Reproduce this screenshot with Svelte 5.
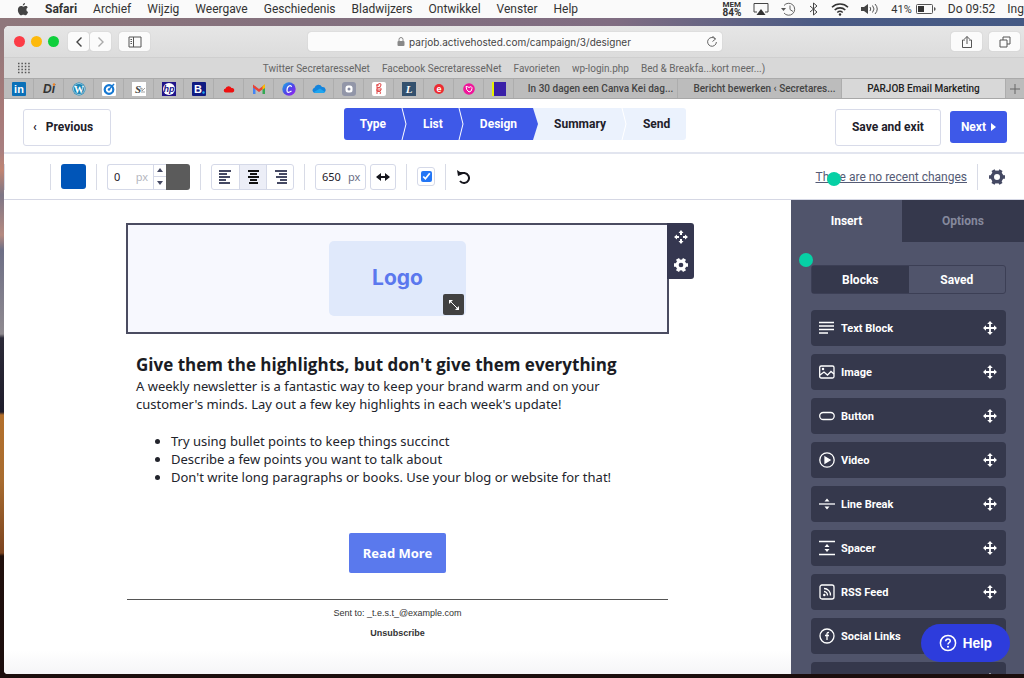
<script>
    const menus = ["Archief", "Wijzig", "Weergave", "Geschiedenis", "Bladwijzers", "Ontwikkel", "Venster", "Help"]
    const bookmarks = ["Twitter SecretaresseNet", "Facebook SecretaresseNet", "Favorieten", "wp-login.php", "Bed & Breakfa...kort meer...)"]
    const pinned = ["linkedin", "di", "wordpress", "target", "sn", "hp", "booking", "cloud", "gmail", "canva", "onedrive", "camera", "script", "letter", "e", "pink", "purple"]
    const tabs = ["In 30 dagen een Canva Kei dag...", "Bericht bewerken ‹ Secretares...", "PARJOB Email Marketing"]
    const steps = ["Type", "List", "Design", "Summary", "Send"]
    const blocks = ["Text Block", "Image", "Button", "Video", "Line Break", "Spacer", "RSS Feed", "Social Links", ""]

    let activeTab = 2
    let currentStep = 2
    let align = "center"
    let border = 0
    let width = 650
    let responsive = true
    let panel = "insert"
    let source = "blocks"
</script>

<div class="desktop">
    <nav class="menubar">
        <svg class="apple" viewBox="0 0 14 16"><path fill="#444" d="M9.5 0c.1 1.5-1.200 3-2.700 3C6.600 1.600 8 .2 9.500 0zM12.700 5.400c-2.300 1.400-2 4.600.6 5.700-.6 1.700-1.900 4-3.300 4-1 0-1.300-.6-2.600-.6s-1.700.6-2.600.6C3 15.100.7 11.600.7 8.500c0-3 2-4.700 3.900-4.700 1.200 0 2 .7 2.900.7.800 0 1.700-.8 3.100-.8.900 0 1.700.6 2.100 1.700z"/></svg>
        <strong>Safari</strong>
        {#each menus as menu}
            <span>{menu}</span>
        {/each}
        <div class="status">
            <span class="mem"><b>MEM</b><b class="load">84%</b></span>
            <svg width="16" height="14" viewBox="0 0 16 14"><path d="M4 10H1V1.500h14V10h-3" fill="none" stroke="#444"/><path d="M8 7l4.500 6h-9z" fill="#333"/></svg>
            <svg width="16" height="14" viewBox="0 0 16 14"><path d="M3 3.500A6 6 0 1 1 3 11M9 3.500V7.500l3 2" fill="none" stroke="#666"/><path d="M0 6h5L2.500 9z" fill="#555"/></svg>
            <svg width="10" height="14" viewBox="0 0 10 14"><path d="M1 4l7 6-3.500 3V1L8 4l-7 6" fill="none" stroke="#444"/></svg>
            <svg width="18" height="14" viewBox="0 0 18 14"><g fill="none" stroke="#333" stroke-width="1.600"><path d="M1 5.200a11.500 11.500 0 0 1 16 0M3.700 8a7.600 7.600 0 0 1 10.600 0M6.300 10.500a4 4 0 0 1 5.400 0"/></g><circle cx="9" cy="12.500" r="1.200" fill="#333"/></svg>
            <svg width="18" height="14" viewBox="0 0 18 14"><path d="M0 5h3l4-3v10L3 9H0z" fill="#444"/><path d="M9 5q1.500 2 0 4M11.500 3.500q3 3.500 0 7M14 2q4.500 5 0 10" fill="none" stroke="#555"/></svg>
            <span class="battery">41% <svg width="20" height="12" viewBox="0 0 20 12"><rect x=".5" y="1.500" width="16" height="9" rx="1" fill="none" stroke="#555"/><rect x="2" y="3" width="6" height="6" fill="#333"/><path d="M18 4v4l1.500-1V5z" fill="#555"/></svg></span>
            <span>Do 09:52</span>
            <span>Ing</span>
        </div>
    </nav>

    <div class="window">
        <div class="titlebar">
            <div class="lights"><i class="red"></i><i class="yellow"></i><i class="green"></i></div>
            <div class="navbuttons">
                <button class="chrome" aria-label="Terug"><svg width="8" height="12" viewBox="0 0 8 12"><path d="M6.500 1.500L2 6l4.500 4.500" fill="none" stroke="#444" stroke-width="1.400"/></svg></button>
                <button class="chrome" aria-label="Vooruit"><svg width="8" height="12" viewBox="0 0 8 12"><path d="M1.500 1.500L6 6l-4.500 4.500" fill="none" stroke="#aaa" stroke-width="1.400"/></svg></button>
            </div>
            <button class="chrome wide" aria-label="Navigatiekolom"><svg width="14" height="12" viewBox="0 0 14 12"><path d="M1 1h12v10H1zM5.500 1v10M2.500 3.500H4M2.500 5.500H4M2.500 7.500H4" fill="none" stroke="#555"/></svg></button>
            <div class="address">
                <svg width="8" height="10" viewBox="0 0 8 10"><rect x=".5" y="4" width="7" height="5" rx="1" fill="#888"/><path d="M2 4V2.500a2 2 0 0 1 4 0V4" fill="none" stroke="#888"/></svg>
                <span>parjob.activehosted.com/campaign/3/designer</span>
                <svg class="reload" width="12" height="12" viewBox="0 0 12 12"><path d="M9.500 3.200A4.400 4.400 0 1 0 10.400 6M6.500 0l3 3-3 2.500" fill="none" stroke="#666"/></svg>
            </div>
            <button class="chrome wide" aria-label="Deel"><svg width="12" height="14" viewBox="0 0 12 14"><path d="M4 5H1.500v7.500h9V5H8M6 9V1.500M3.500 4L6 1.500 8.500 4" fill="none" stroke="#555"/></svg></button>
            <button class="chrome wide" aria-label="Toon tabs"><svg width="12" height="12" viewBox="0 0 12 12"><path d="M1 4h7v7H1zM4 4V1h7v7H8" fill="none" stroke="#555"/></svg></button>
        </div>

        <div class="bookmarks">
            <svg class="grid" width="14" height="12" viewBox="0 0 14 12"><path d="M1 1.500h12M1 4.500h12M1 7.500h12M1 10.500h12" stroke="#555" stroke-width="1.400" stroke-dasharray="1.500 1.900"/></svg>
            {#each bookmarks as bookmark}
                <span>{bookmark}</span>
            {/each}
        </div>

        <div class="tabbar">
            {#each pinned as site}
                <div class="pin">
                    <svg width="14" height="14" viewBox="0 0 14 14">
                        {#if site == "linkedin"}
                            <rect width="14" height="14" rx="1" fill="#0a70b8"/><text x="7" y="11" class="glyph" font-size="11" fill="#fff">in</text>
                        {:else if site == "di"}
                            <text x="7" y="11" class="glyph slanted" font-size="12" fill="#333">Di</text><circle cx="12" cy="2.500" r="1.200" fill="#f08020"/>
                        {:else if site == "wordpress"}
                            <circle cx="7" cy="7" r="6.500" fill="#1683b5"/><circle cx="7" cy="7" r="5.500" fill="none" stroke="#d5e5ec" stroke-width=".7"/><text x="7" y="11" class="glyph serif" font-size="10" fill="#fff">W</text>
                        {:else if site == "target"}
                            <rect width="14" height="14" rx="1" fill="#fff"/><circle cx="7" cy="7.500" r="4.300" fill="none" stroke="#1678d2" stroke-width="2.200"/><circle cx="7" cy="7.500" r="1.300" fill="#1678d2"/><path d="M7 7.500L12 2" fill="none" stroke="#1678d2" stroke-width="1.500"/>
                        {:else if site == "sn"}
                            <rect width="14" height="14" fill="#fff"/><text x="6" y="11" class="glyph serif slanted" font-size="11" fill="#444">S</text><path d="M8 7l2-1v3l3-3M9 10h4" stroke="#888" fill="none" stroke-width=".8"/>
                        {:else if site == "hp"}
                            <rect width="14" height="14" fill="#20158a"/><circle cx="7" cy="7" r="6" fill="#fff"/><text x="7" y="10" class="glyph slanted" font-size="9" fill="#20158a">hp</text>
                        {:else if site == "booking"}
                            <rect width="14" height="14" rx="1" fill="#101b82"/><text x="6" y="11" class="glyph" font-size="11" fill="#fff">B</text><circle cx="11.500" cy="10.500" r="1.200" fill="#1ca8f4"/>
                        {:else if site == "cloud"}
                            <path d="M4 10.500a2 2 0 0 1-.5-4 3.200 3.200 0 0 1 6-.5 2.300 2.300 0 0 1 1 4.500z" fill="#ee1010"/>
                        {:else if site == "gmail"}
                            <path d="M1 12V4h2.500v8z" fill="#4285f4"/><path d="M10.500 12V4H13v8z" fill="#34a853"/><path d="M1 2.500L7 7l6-4.500v3L7 10 1 5.500z" fill="#ea4335"/><path d="M10.500 4L13 2.300V6l-2.500 1.800z" fill="#fbbc04"/>
                        {:else if site == "canva"}
                            <linearGradient id="canva" x2="1" y2="1"><stop stop-color="#16b5e4"/><stop offset=".5" stop-color="#4d46e8"/><stop offset="1" stop-color="#a01cf0"/></linearGradient><circle cx="7" cy="7" r="6.700" fill="url(#canva)"/><path d="M9.500 5Q9 3 7 4T5 8.500t4.500.5" fill="none" stroke="#fff" stroke-width="1.200"/>
                        {:else if site == "onedrive"}
                            <path d="M3 11a2.700 2.700 0 0 1-.5-5.300A4 4 0 0 1 10 5a3.100 3.100 0 0 1 1.500 6z" fill="#1484dc"/><path d="M2 10l6-3.500 5 3.500q-1 1-2 1H3z" fill="#1fa6ef"/>
                        {:else if site == "camera"}
                            <rect width="14" height="14" rx="3" fill="#9296a8"/><rect x="3.500" y="3.500" width="7" height="7" rx="2.500" fill="#fff"/><circle cx="7" cy="7" r="1.500" fill="#8589a0"/>
                        {:else if site == "script"}
                            <rect width="14" height="14" rx="2" fill="#fff"/><path d="M5 12V3q4-3 4 0T5 6q5-1 4 2t-4 1q5 0 3 3M4 3h3M4 8h5" fill="none" stroke="#e04545"/>
                        {:else if site == "letter"}
                            <rect width="14" height="14" fill="#34516e"/><text x="7" y="11" class="glyph serif slanted" font-size="11" fill="#fff">L</text>
                        {:else if site == "e"}
                            <circle cx="7" cy="7" r="5" fill="#ed2b31"/><text x="7" y="10" class="glyph" font-size="9" fill="#fff">e</text>
                        {:else if site == "pink"}
                            <circle cx="7" cy="7" r="5.800" fill="#f0149a"/><path d="M4 4.500q2 0 3 1 3-2 3 1T7 10Q4 8 4 4.500z" fill="none" stroke="#fff"/>
                        {:else}
                            <path fill="#3a20a8" d="M0 0h14v14H0z"/><path fill="#e8f000" d="M0 0h2v14H0z"/>
                        {/if}
                    </svg>
                </div>
            {/each}
            {#each tabs as tab, i}
                <button class="tab" class:active={i == activeTab} on:click={() => activeTab = i}>{tab}</button>
            {/each}
            <button class="newtab" aria-label="Nieuwe tab"><svg width="10" height="10" viewBox="0 0 10 10"><path d="M5 0v10M0 5h10" stroke="#666"/></svg></button>
        </div>

        <header>
            <button class="outline back"><span>‹</span>Previous</button>
            <ol class="steps">
                {#each steps as step, i}
                    <li class:done={i <= currentStep}>{step}
                        {#if i < steps.length - 1}
                            <svg width="8" height="32" viewBox="0 0 8 32"><path d="M0 0h2l5 16-5 16H0z" fill={i <= currentStep ? "#3e59e8" : "#ebf2fd"}/>{#if i != currentStep}<path d="M2 0l4 16-4 16" fill="none" stroke="#fff"/>{/if}</svg>
                        {/if}
                    </li>
                {/each}
            </ol>
            <div class="actions">
                <button class="outline">Save and exit</button>
                <button class="next">Next <svg width="5" height="8" viewBox="0 0 5 8"><path d="M0 0l5 4-5 4z" fill="#fff"/></svg></button>
            </div>
        </header>

        <div class="tools">
            <hr class="first">
            <hr>
            <button class="swatch blue" aria-label="Background color"></button>
            <hr>
            <div class="stepper">
                <label><input bind:value={border} aria-label="Border width"><span>px</span></label>
                <div class="arrows">
                    <button aria-label="Increase" on:click={() => border++}><svg width="6" height="4" viewBox="0 0 6 4"><path d="M0 4l3-4 3 4z" fill="#454963"/></svg></button>
                    <button aria-label="Decrease" on:click={() => border--}><svg width="6" height="4" viewBox="0 0 6 4"><path d="M0 0l3 4 3-4z" fill="#454963"/></svg></button>
                </div>
                <button class="swatch gray" aria-label="Border color"></button>
            </div>
            <hr>
            <div class="aligns">
                <button aria-label="Left" class:on={align == "left"} on:click={() => align = "left"}><svg width="13" height="14" viewBox="0 0 13 14"><path d="M0 1h12M0 4h8M0 7h11M0 10h7M0 13h11"/></svg></button>
                <button aria-label="Center" class:on={align == "center"} on:click={() => align = "center"}><svg width="13" height="14" viewBox="0 0 13 14"><path d="M1 1h11M3 4h7M1 7h11M3 10h7M2 13h9"/></svg></button>
                <button aria-label="Right" class:on={align == "right"} on:click={() => align = "right"}><svg width="13" height="14" viewBox="0 0 13 14"><path d="M1 1h12M5 4h8M2 7h11M6 10h7M3 13h10"/></svg></button>
            </div>
            <hr>
            <div class="widths">
                <label class="size"><input bind:value={width} aria-label="Width"><span>px</span></label>
                <button class="square" aria-label="Full width"><svg width="14" height="10" viewBox="0 0 14 10"><path d="M0 5l5-4v3h4V1l5 4-5 4V6H5v3z" fill="#16161d"/></svg></button>
            </div>
            <hr>
            <label class="check"><input type="checkbox" bind:checked={responsive} aria-label="Responsive"></label>
            <hr>
            <button class="undo" aria-label="Undo"><svg width="14" height="14" viewBox="0 0 14 14"><path d="M2 3h5.500a5 5 0 1 1-4.500 8" fill="none" stroke="#16161d" stroke-width="2"/><path d="M0 0l1 6 5-2z" fill="#16161d"/></svg></button>
            <div class="changes">
                <a href="#changes">There are no recent changes</a>
                <i class="dot"></i>
            </div>
            <hr>
            <button class="cog" aria-label="Settings"><svg width="18" height="18" viewBox="0 0 18 18"><circle cx="9" cy="9" r="4.700" fill="none" stroke="#454963" stroke-width="3.400"/><path d="M9 1v2.500M9 14.500V17M2.100 5l2.200 1.200M13.700 11.800l2.200 1.200M2.100 13l2.200-1.200M13.700 6.200L15.900 5" stroke="#454963" stroke-width="3.600" transform="rotate(30 9 9)"/></svg></button>
        </div>

        <div class="designer">
            <main>
                <div class="email">
                    <section class="logoblock">
                        <div class="logo">Logo
                            <button class="resize" aria-label="Resize"><svg width="10" height="10" viewBox="0 0 10 10"><path d="M2 2l6 6" stroke="#fff"/><path d="M0 0h4L0 4zM10 10H6l4-4z" fill="#fff"/></svg></button>
                        </div>
                        <div class="handles">
                            <button aria-label="Move"><svg width="14" height="14" viewBox="0 0 14 14"><path d="M7 0l2.500 3H8v2H6V3H4.500zM7 14l2.500-3H8V9H6v2H4.500zM0 7l3-2.500V6h2v2H3v1.500zM14 7l-3-2.500V6H9v2h2v1.500z" fill="#fff"/></svg></button>
                            <button aria-label="Block settings"><svg width="14" height="14" viewBox="0 0 18 18"><circle cx="9" cy="9" r="5" fill="none" stroke="#fff" stroke-width="4"/><path d="M9 0v3M9 15v3M1.200 4.500l2.600 1.500M14.200 12l2.600 1.500M1.200 13.500L3.800 12M14.200 6l2.600-1.500" stroke="#fff" stroke-width="4.500" transform="rotate(30 9 9)"/></svg></button>
                        </div>
                    </section>
                    <article>
                        <h1>Give them the highlights, but don't give them everything</h1>
                        <p>A weekly newsletter is a fantastic way to keep your brand warm and on your customer's minds. Lay out a few key highlights in each week's update!</p>
                        <ul>
                            <li>Try using bullet points to keep things succinct</li>
                            <li>Describe a few points you want to talk about</li>
                            <li>Don't write long paragraphs or books. Use your blog or website for that!</li>
                        </ul>
                    </article>
                    <a class="more" href="#more">Read More</a>
                    <footer>
                        <p>Sent to: _t.e.s.t_@example.com</p>
                        <a href="#unsubscribe">Unsubscribe</a>
                    </footer>
                </div>
            </main>

            <aside>
                <div class="panels">
                    <button class:active={panel == "insert"} on:click={() => panel = "insert"}>Insert</button>
                    <button class:active={panel == "options"} on:click={() => panel = "options"}>Options</button>
                </div>
                <i class="dot"></i>
                <div class="sources">
                    <button class:active={source == "blocks"} on:click={() => source = "blocks"}>Blocks</button>
                    <button class:active={source == "saved"} on:click={() => source = "saved"}>Saved</button>
                </div>
                <ul class="blocks">
                    {#each blocks as block}
                        <li>
                            <svg class="icon" width="16" height="16" viewBox="0 0 16 16">
                                {#if block == "Text Block"}
                                    <path d="M0 2.500h15M0 6h15M0 9.500h15M0 13h9"/>
                                {:else if block == "Image"}
                                    <rect x=".7" y="2" width="14.300" height="12" rx="1.500"/><path d="M1 11l4-3 3.500 3L12 7.500l3 2.500"/><circle cx="4" cy="5" r=".6"/>
                                {:else if block == "Button"}
                                    <rect x=".7" y="4.500" width="14.500" height="7" rx="3.500"/>
                                {:else if block == "Video"}
                                    <circle cx="8" cy="8" r="7.200"/><path d="M6 5l5 3-5 3z" fill="#fff"/>
                                {:else if block == "Line Break"}
                                    <path d="M0 8h16"/><path class="solid" d="M8 2.500l2.500 3h-5zM8 13.500l2.500-3h-5z"/>
                                {:else if block == "Spacer"}
                                    <path d="M0 1.500h16M0 14.500h16"/><path class="solid" d="M8 4l2.500 3h-5zM8 12l2.500-3h-5z"/>
                                {:else if block == "RSS Feed"}
                                    <rect x="1" y="1" width="14" height="14" rx="2"/><path d="M5 4.500a6.500 6.500 0 0 1 6.500 7M5 7.500a3.800 3.800 0 0 1 3.500 4"/><circle cx="5.300" cy="11" r=".6"/>
                                {:else if block == "Social Links"}
                                    <circle cx="8" cy="8" r="7"/><path d="M10 4.700Q8 4 8 6v6M6 7.500h4"/>
                                {/if}
                            </svg>
                            <span>{block}</span>
                            <svg width="14" height="14" viewBox="0 0 14 14"><path d="M7 1v12M1 7h12" stroke="#fff" stroke-width="1.800"/><path d="M7 0l2.800 3H4.200zM7 14l2.800-3H4.200zM0 7l3-2.800v5.600zM14 7l-3-2.800v5.600z" fill="#fff"/></svg>
                        </li>
                    {/each}
                </ul>
                <button class="help"><svg width="18" height="18" viewBox="0 0 18 18"><circle cx="9" cy="9" r="7.600" fill="none" stroke="#fff" stroke-width="1.500"/><path d="M6.700 7.200Q6.900 5 9 5t2.300 2Q11.300 8 9.900 8.800 9 9.300 9 10.500" fill="none" stroke="#fff" stroke-width="1.500"/><circle cx="9" cy="12.700" r="1" fill="#fff"/></svg>Help</button>
            </aside>
        </div>
    </div>
</div>

<style>
    :global(body) {
        margin: 0;
    }

    * {
        box-sizing: border-box;
    }

    button {
        font: inherit;
        color: inherit;
        border: 0;
        padding: 0;
        background: none;
        display: flex;
        align-items: center;
        justify-content: center;
        cursor: pointer;
    }

    hr {
        margin: 0;
        border: 0;
    }

    svg {
        flex: none;
    }

    .desktop {
        height: 100vh;
        overflow: hidden;
        display: flex;
        flex-direction: column;
        padding-bottom: 4px;
        background:
            linear-gradient(90deg, #8f777b, #83707e 30%, #806d82 60%, #4b5b85 80%, #445984) 0 18px / 100% 10px no-repeat,
            linear-gradient(#8f777b 28px, #a87a78 110px, #a87f80 150px, #c08472 170px, #7d7686 195px, #b58a80 235px, #6d6f86 250px, #8f8a90 334px, #2b2a38 338px, #1f1d2b 412px, #b3702c 415px, #a86c30 480px, #7c4420 553px, #200f0c 556px, #1b0e0d);
        font-family: Roboto, "Liberation Sans", sans-serif;
    }

    .menubar {
        height: 18px;
        flex: none;
        background: #fafafa;
        color: #333;
        display: flex;
        align-items: center;
        gap: 16px;
        padding-left: 17px;
        font-size: 12px;
        white-space: nowrap;
        overflow: hidden;
    }

    .apple {
        width: 12px;
        height: 13px;
    }

    .status {
        margin-left: auto;
        display: flex;
        align-items: center;
        gap: 12px;
    }

    .mem {
        display: flex;
        flex-direction: column;
        font-size: 8px;
        line-height: 8px;
    }

    .load {
        font-size: 10px;
    }

    .battery {
        display: flex;
        align-items: center;
        gap: 4px;
        font-size: 11px;
    }

    .window {
        flex: 1;
        min-height: 0;
        margin: 8px 0 0 4px;
        border-radius: 5px 0 0 4px;
        overflow: hidden;
        display: flex;
        flex-direction: column;
        background: #fff;
    }

    .titlebar {
        height: 32px;
        flex: none;
        display: flex;
        align-items: center;
        padding: 0 4px 0 10px;
        background: linear-gradient(#e6e6e6, #dcdcdc);
        border-bottom: 1px solid #cfcfcf;
    }

    .lights {
        display: flex;
        gap: 6px;
        margin-right: 9px;
    }

    .lights i {
        width: 11px;
        height: 11px;
        border-radius: 50%;
    }

    .red {
        background: #fc3c46;
    }

    .yellow {
        background: #fdb90c;
    }

    .green {
        background: #0fcf3c;
    }

    .navbuttons {
        display: flex;
        gap: 1px;
        margin-right: 8px;
    }

    .chrome {
        width: 21px;
        height: 19px;
        border-radius: 3px;
        background: #fbfbfb;
        box-shadow: 0 0 1px #aaa;
    }

    .chrome.wide {
        width: 31px;
    }

    .chrome.wide + .chrome.wide {
        margin-left: 7px;
    }

    .address {
        flex: 1;
        margin: 0 229px 0 158px;
        height: 19px;
        border-radius: 3px;
        background: #fbfbfb;
        box-shadow: 0 0 1px #aaa;
        display: flex;
        align-items: center;
        gap: 4px;
        padding: 0 4px 0 18px;
        font-size: 10px;
        font-family: Inter, sans-serif;
        color: #444;
    }

    .address svg:first-child {
        margin-left: auto;
    }

    .reload {
        margin-left: auto;
    }

    .bookmarks {
        height: 20px;
        flex: none;
        position: relative;
        display: flex;
        align-items: center;
        justify-content: center;
        gap: 12px;
        background: #d8d8d8;
        color: #666;
        font-size: 10px;
    }

    .grid {
        position: absolute;
        left: 13px;
    }

    .tabbar {
        height: 21px;
        flex: none;
        display: flex;
        background: #bcbcbc;
        border-top: 1px solid #aaa;
        border-bottom: 1px solid #a8a8a8;
        font-size: 10px;
        color: #444;
    }

    .pin {
        width: 30px;
        flex: none;
        display: flex;
        align-items: center;
        justify-content: center;
        border-right: 1px solid #adadad;
    }

    .glyph {
        font-family: "Liberation Sans", sans-serif;
        font-weight: bold;
        text-anchor: middle;
    }

    .glyph.serif {
        font-family: "Liberation Serif", serif;
    }

    .slanted {
        font-style: italic;
    }

    .tab {
        flex: 1;
        min-width: 0;
        padding-left: 10px;
        white-space: nowrap;
        font-weight: 500;
        border-right: 1px solid #adadad;
    }

    .tab.active {
        padding: 0 5px;
        background: #d8d8d8;
        color: #222;
    }

    .newtab {
        width: 18px;
    }

    header {
        height: 55px;
        flex: none;
        display: grid;
        grid-template-columns: 1fr auto 1fr;
        align-items: center;
        padding: 3px 17px 0 19px;
        border-bottom: 2px solid #e2e5ef;
        font-size: 12px;
        font-weight: bold;
        color: #1e2029;
    }

    .outline {
        height: 37px;
        padding: 0 16px;
        border: 1px solid #d8dbe9;
        border-radius: 3px;
        background: #fff;
    }

    .back {
        justify-self: start;
        gap: 9px;
        padding: 0 17px 0 9px;
    }

    .steps {
        display: flex;
        margin: 0 0 6px;
        padding: 0;
        list-style: none;
        border-radius: 3px;
        overflow: hidden;
    }

    .steps li {
        position: relative;
        height: 32px;
        padding: 0 16px 0 21px;
        line-height: 32px;
        background: #ebf2fd;
    }

    .steps li:first-child {
        padding-left: 16px;
    }

    .steps li.done {
        background: #3e59e8;
        color: #fff;
    }

    .steps svg {
        position: absolute;
        left: 100%;
        margin-left: -2px;
        top: 0;
        z-index: 1;
    }

    .actions {
        justify-self: end;
        display: flex;
        align-items: center;
        gap: 9px;
    }

    .next {
        height: 32px;
        padding: 0 11px;
        gap: 5px;
        border-radius: 3px;
        background: #3e59e8;
        color: #fff;
    }

    .tools {
        height: 46px;
        flex: none;
        display: flex;
        align-items: center;
        gap: 10px;
        padding-right: 18px;
        border-bottom: 1px solid #d5d7e4;
        font-family: "Noto Sans", sans-serif;
        font-size: 11px;
        color: #1e2029;
    }

    .tools hr {
        width: 1px;
        height: 26px;
        background: #d8dbe6;
    }

    .tools .first {
        margin-right: 35px;
    }

    .swatch {
        width: 25px;
        height: 25px;
        border-radius: 3px;
    }

    .blue {
        background: #0055b8;
    }

    .gray {
        background: #5b5b5b;
        border-radius: 0 3px 3px 0;
    }

    .stepper, .aligns, .widths {
        display: flex;
    }

    .widths {
        gap: 4px;
    }

    .tools label {
        height: 26px;
        display: flex;
        align-items: center;
        border: 1px solid #d5d9e8;
        border-radius: 3px;
    }

    .tools input {
        font: inherit;
        color: inherit;
        min-width: 0;
        border: 0;
        padding: 0 0 0 6px;
        background: none;
        outline: 0;
    }

    .stepper label {
        width: 46px;
        padding-right: 5px;
        border-right: 0;
        border-radius: 3px 0 0 3px;
    }

    .stepper input {
        width: 29px;
    }

    .stepper span {
        color: #b5b7c0;
    }

    .arrows {
        width: 13px;
        display: flex;
        flex-direction: column;
        border: 1px solid #d5d9e8;
        border-right: 0;
    }

    .arrows button {
        flex: 1;
    }

    .arrows button + button {
        border-top: 1px solid #d5d9e8;
    }

    .stepper .swatch {
        height: 26px;
        width: 24px;
    }

    .aligns {
        height: 26px;
        border: 1px solid #d5d9e8;
        border-radius: 3px;
    }

    .aligns button {
        width: 27px;
    }

    .aligns button + button {
        border-left: 1px solid #d5d9e8;
    }

    .aligns svg {
        stroke: #454963;
        stroke-width: 2;
    }

    .aligns .on {
        background: #eceef7;
    }

    .aligns .on svg {
        stroke: #111;
    }

    .size {
        width: 51px;
    }

    .size input {
        width: 32px;
    }

    .size span {
        color: #6a6e85;
    }

    .square {
        width: 26px;
        height: 26px;
        border: 1px solid #d5d9e8;
        border-radius: 3px;
    }

    .tools .check {
        width: 18px;
        height: 19px;
        justify-content: center;
    }

    .check input {
        width: 11px;
        height: 11px;
        margin: 0;
        accent-color: #2376f5;
    }

    .undo {
        width: 15px;
    }

    .changes {
        margin-left: auto;
        position: relative;
        font-family: Roboto, sans-serif;
        font-size: 12px;
    }

    .changes a {
        color: #555b75;
    }

    .dot {
        position: absolute;
        width: 14px;
        height: 14px;
        border-radius: 50%;
        background: #06d0a5;
    }

    .changes .dot {
        left: 12px;
        top: 2px;
    }

    .designer {
        flex: 1;
        min-height: 0;
        display: flex;
    }

    main {
        flex: 1;
        min-width: 0;
        padding-top: 23px;
        background: linear-gradient(#fff 95%, #f5f5f7);
        font-family: "Noto Sans", sans-serif;
        color: #22242c;
    }

    .email {
        max-width: 543px;
        margin: 0 auto;
        display: flex;
        flex-direction: column;
        align-items: center;
    }

    .logoblock {
        position: relative;
        align-self: stretch;
        padding: 16px 0;
        display: flex;
        justify-content: center;
        background: #f7f8fe;
        border: 2px solid #4b4c61;
    }

    .logo {
        position: relative;
        width: 137px;
        height: 75px;
        padding-bottom: 3px;
        display: flex;
        align-items: center;
        justify-content: center;
        border-radius: 5px;
        background: #e0e9fb;
        color: #5b78ee;
        font-family: Inter, sans-serif;
        font-size: 21px;
        font-weight: bold;
    }

    .resize {
        position: absolute;
        right: 2px;
        bottom: 1px;
        width: 21px;
        height: 21px;
        border-radius: 2px;
        background: #414141;
    }

    .handles {
        position: absolute;
        left: 100%;
        top: -2px;
        width: 27px;
        border-radius: 0 3px 3px 0;
        background: #353750;
    }

    .handles button {
        width: 100%;
        height: 28px;
    }

    article {
        align-self: stretch;
        padding: 19px 10px 0;
        font-size: 13px;
        line-height: 18px;
    }

    h1 {
        margin: 0;
        font-family: "Open Sans", sans-serif;
        font-size: 17px;
        line-height: 24px;
        color: #1a1c24;
    }

    article p {
        margin: 0;
    }

    article ul {
        margin: 19px 0 0;
        padding-left: 35px;
    }

    .more {
        margin: 47px 0 26px;
        padding: 0 14px;
        line-height: 40px;
        border-radius: 2px;
        background: #5a79ed;
        color: #fff;
        font-size: 13px;
        font-weight: bold;
        text-decoration: none;
    }

    footer {
        align-self: stretch;
        padding-top: 7px;
        border-top: 1px solid #555;
        text-align: center;
        font-family: "Liberation Sans", sans-serif;
        font-size: 9px;
        line-height: 12px;
        margin: 0 1px;
        color: #333;
    }

    footer p {
        margin: 0 0 8px;
    }

    footer a {
        display: block;
        color: inherit;
        font-weight: bold;
        text-decoration: none;
    }

    aside {
        position: relative;
        width: 233px;
        flex: none;
        overflow: hidden;
        background: #50546b;
        color: #fff;
        font-size: 12px;
        font-weight: bold;
    }

    .panels {
        display: grid;
        grid-template-columns: 111px 1fr;
        height: 42px;
    }

    .panels button {
        background: #35384c;
        color: #85899d;
    }

    .panels .active {
        background: none;
        color: #fff;
    }

    aside > .dot {
        left: 8px;
        top: 53px;
    }

    .sources {
        display: grid;
        grid-template-columns: 1fr 1fr;
        height: 29px;
        margin: 23px 18px 16px 20px;
        border: 1px solid #3c3f55;
        border-radius: 3px;
    }

    .sources .active {
        background: #35384c;
    }

    .blocks {
        margin: 0 18px 0 20px;
        padding: 0;
        display: grid;
        gap: 8px;
        list-style: none;
        font-size: 11px;
    }

    .blocks li {
        height: 36px;
        display: flex;
        align-items: center;
        gap: 6px;
        padding: 0 9px 0 8px;
        border-radius: 4px;
        background: #35384c;
    }

    .blocks span {
        flex: 1;
    }

    .icon {
        fill: none;
        stroke: #fff;
        stroke-width: 1.3;
    }

    .solid {
        fill: #fff;
        stroke: none;
    }

    .help {
        position: absolute;
        right: 14px;
        bottom: 12px;
        height: 38px;
        padding: 0 18px;
        gap: 6px;
        border-radius: 19px;
        background: #2d3cdc;
        font-family: Inter, sans-serif;
        font-size: 13px;
    }
</style>
